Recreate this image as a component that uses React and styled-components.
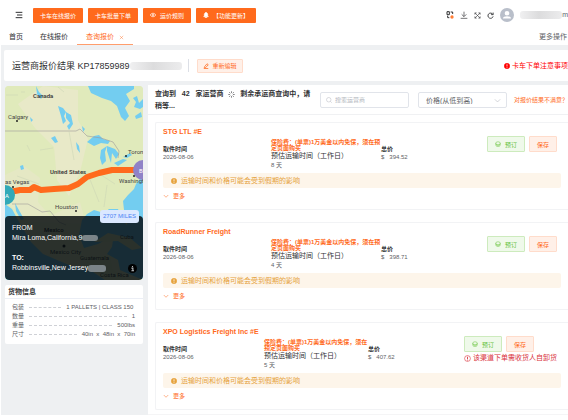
import React, { useState } from 'react';
import styled, { createGlobalStyle } from 'styled-components';

const GlobalStyle = createGlobalStyle`
  * {
    box-sizing: border-box;
  }
  body {
    margin: 0;
    background: #fff;
    color: #303133;
    font-family: 'Liberation Sans', 'Noto Sans CJK SC', sans-serif;
    font-size: 6px;
    line-height: 8px;
    overflow: hidden;
  }
  button, input, select {
    font-family: inherit;
  }
  h1, h2, h3, p, dl, dd, dt {
    margin: 0;
  }
`;

const TopBar = styled.header`
  display: flex;
  align-items: center;
  height: 30px;
  padding: 0 0 0 15px;
`;

const IconButton = styled.button`
  display: flex;
  padding: 0;
  border: none;
  background: none;
  color: #303133;
`;

const QuickLinks = styled.nav`
  display: flex;
  gap: 5px;
  margin-left: 10px;
`;

const PrimaryButton = styled.button`
  display: flex;
  align-items: center;
  justify-content: center;
  gap: 4px;
  height: 15px;
  padding: 0 7px;
  border: none;
  border-radius: 1px;
  background: #ff6a1c;
  color: #fff;
  font-size: 6px;
  white-space: nowrap;
`;

const Tools = styled.div`
  display: flex;
  align-items: center;
  gap: 6px;
  margin-left: auto;
`;

const UserName = styled.span`
  display: flex;
  align-items: center;
  color: #606266;
  font-size: 7px;
`;

const Redacted = styled.span`
  display: inline-block;
  width: ${props => props.$width}px;
  height: ${props => props.$height || 8}px;
  border-radius: 3px;
  background: ${props => props.$color || 'linear-gradient(90deg, #f0f0f1, #dcdcdd 45%, #ececed)'};
  vertical-align: middle;
`;

const TabBar = styled.nav`
  display: flex;
  gap: 1px;
  height: 15px;
  padding-left: 1px;
  font-size: 7px;
`;

const Tab = styled.a`
  display: flex;
  align-items: center;
  gap: 5px;
  height: 15px;
  padding: 0 ${props => (props.$active ? 9 : 8)}px;
  border-bottom: 1px solid ${props => (props.$active ? '#ff9d6c' : 'transparent')};
  color: ${props => (props.$active ? '#ff6a1c' : '#303133')};
  text-decoration: none;
`;

const MoreActions = styled.button`
  height: 14px;
  margin-left: auto;
  padding: 0 1px 0 0;
  border: none;
  background: none;
  color: #606266;
  font-size: 7px;
  line-height: 8px;
`;

const Page = styled.main`
  margin-left: 1px;
  background: #eef0f2;
  padding-top: 5px;
`;

const TitleCard = styled.section`
  display: flex;
  align-items: center;
  height: 31px;
  margin-left: 3px;
  padding-left: 8px;
  border-radius: 2px 0 0 2px;
  background: #fff;
`;

const PageTitle = styled.h1`
  display: flex;
  align-items: center;
  font-size: 9px;
  font-weight: 400;
  line-height: 12px;
  white-space: pre;
`;

const Divider = styled.span`
  width: 1px;
  height: 13px;
  margin: 0 8px 0 6px;
  background: #dcdfe6;
`;

const PlainButton = styled.button`
  display: flex;
  align-items: center;
  justify-content: center;
  gap: 4px;
  height: ${props => props.$height || 16}px;
  padding: 0 ${props => (props.$compact ? 5 : 7)}px;
  border: 1px solid ${props => (props.$tone === 'success' ? '#cdebbd' : '#ffdccb')};
  border-radius: 1px;
  background: ${props => (props.$tone === 'success' ? '#eff9ea' : '#fff0e8')};
  color: ${props => (props.$tone === 'success' ? '#67c23a' : '#ff6a1c')};
  font-size: 6px;
  white-space: nowrap;
`;

const Notice = styled.a`
  display: flex;
  align-items: center;
  gap: 2px;
  margin-left: auto;
  color: #f00;
  font-size: 7px;
  text-decoration: none;
  white-space: nowrap;
`;

const Columns = styled.div`
  display: grid;
  grid-template-columns: 138px 1fr;
  gap: 5px;
  align-items: start;
  padding: 4px 0 0 4px;
`;

const Sidebar = styled.aside`
  display: grid;
  gap: 5px;
  padding-top: 1px;
`;

const MapCard = styled.section`
  position: relative;
  height: 194px;
  border-radius: 4px;
  overflow: hidden;
  background: #e1eabf;

  > svg {
    display: block;
    width: 100%;
    height: 100%;
  }
`;

const RouteInfo = styled.div`
  position: absolute;
  left: 0;
  right: 0;
  bottom: 0;
  height: 64px;
  padding: 7px 7px;
  border-radius: 4px;
  background: rgba(2, 8, 12, 0.82);
  color: #fff;
  font-size: 7px;
  line-height: 10px;

  dd {
    margin-bottom: 10px;
  }
`;

const Miles = styled.span`
  position: absolute;
  right: 4px;
  top: 124px;
  padding: 1px 3px;
  border-radius: 3px;
  background: #dbe8ff;
  color: #4b83f5;
  font-size: 6px;
  line-height: 11px;
`;

const MapInfo = styled.button`
  position: absolute;
  right: 6px;
  bottom: 7px;
  display: flex;
  padding: 0;
  border: none;
  background: none;
`;

const CargoCard = styled.section`
  border-radius: 2px;
  background: #fff;
`;

const CargoTitle = styled.h2`
  padding: 2px 3px;
  border-bottom: 1px solid #ebeef5;
  font-size: 7px;
  line-height: 9px;
`;

const CargoList = styled.dl`
  display: grid;
  padding: 4px 8px 5px 7px;
`;

const CargoRow = styled.div`
  display: flex;
  align-items: center;
  gap: 5px;
  color: #606266;
  line-height: 9px;
  white-space: pre;

  &::before {
    content: '';
    order: 1;
    flex: 1;
    border-top: 1px dashed #cfd1d6;
  }
  dd {
    order: 2;
  }
`;

const Results = styled.section`
  background: #fff;
  min-width: 0;
`;

const FilterBar = styled.div`
  display: flex;
  align-items: flex-start;
  height: 30px;
  padding: 3px 0 0 7px;
  border-bottom: 1px solid #f0f1f3;
`;

const Summary = styled.h2`
  flex: none;
  width: 161px;
  margin-right: 4px;
  font-size: 7px;
  line-height: 12px;
  white-space: pre-wrap;

  svg {
    margin: 0 3px;
    vertical-align: middle;
  }
`;

const SearchBox = styled.label`
  display: flex;
  flex: none;
  align-items: center;
  gap: 3px;
  width: 89px;
  height: 16px;
  margin-top: 4px;
  padding: 0 5px;
  border: 1px solid #e1e4ea;
  border-radius: 2px;
  color: #b4b7be;

  input {
    flex: 1;
    min-width: 0;
    padding: 0;
    border: none;
    outline: none;
    font-size: 6px;
  }
  input::placeholder {
    color: #b4b7be;
  }
`;

const SortBox = styled.div`
  display: flex;
  flex: none;
  align-items: center;
  width: 89px;
  height: 16px;
  margin: 4px 0 0 9px;
  padding: 0 5px 0 7px;
  border: 1px solid #e1e4ea;
  border-radius: 2px;
  color: #b4b7be;

  select {
    flex: 1;
    height: 14px;
    padding: 0;
    border: none;
    outline: none;
    appearance: none;
    background: none;
    color: #606266;
    font-size: 7px;
  }
`;

const Feedback = styled.a`
  margin: 8px 0 0 7px;
  color: #ff6a1c;
  text-decoration: none;
  white-space: nowrap;
`;

const QuoteList = styled.div`
  display: grid;
  gap: 12px;
  padding: 7px 0 4px 7px;
  border-bottom: 1px solid #f5f5f6;
`;

const Quote = styled.article`
  height: 88px;
  padding: 4px 7px 0;
  border: 1px solid #f2f3f5;
  border-right: none;
  border-radius: 2px 0 0 2px;
`;

const Carrier = styled.h3`
  color: #ff6a1c;
  font-size: 7px;
  line-height: 9px;
`;

const QuoteBody = styled.div`
  display: grid;
  grid-template-columns: ${props => (props.$wide ? '101px 104px 1fr auto' : '108px 110px 1fr auto')};
  height: 37px;
`;

const Field = styled.div`
  padding-top: ${props => props.$top || 9}px;
  color: #606266;
  white-space: pre;

  strong {
    display: block;
    color: #303133;
  }
`;

const Insurance = styled.p`
  color: #ff6a1c;
  font-weight: 700;
  line-height: 6px;
  white-space: normal;
`;

const Transit = styled.p`
  color: #303133;
  font-size: 7px;
  line-height: 10px;
`;

const Actions = styled.div`
  display: grid;
  grid-template-columns: ${props => (props.$wide ? 'auto auto 1fr' : 'auto auto')};
  align-content: start;
  gap: 1px 4px;
  margin-right: 4px;
`;

const Unloading = styled.p`
  display: flex;
  grid-column: 1 / -1;
  align-items: center;
  gap: 2px;
  color: #d9303a;
  font-size: 7px;
  line-height: 10px;
  white-space: nowrap;
`;

const Alert = styled.p`
  display: flex;
  align-items: center;
  gap: 4px;
  height: 15px;
  padding-left: 8px;
  border-radius: 2px;
  background: #fdf5ea;
  color: #e6a23c;
  font-size: 7px;
`;

const MoreButton = styled.button`
  display: flex;
  align-items: center;
  gap: 4px;
  margin-top: 4px;
  padding: 0;
  border: none;
  background: none;
  color: #ff6a1c;
  font-size: 6px;
  line-height: 8px;
`;

const cargo = [
  ['包装', '1 PALLETS | CLASS 150 '],
  ['数量', '1'],
  ['重量', '500lbs'],
  ['尺寸', '40in  x  48in  x  70in'],
];

const quotes = [
  { carrier: 'STG LTL #E', price: '394.52', days: 8 },
  { carrier: 'RoadRunner Freight', price: '398.71', days: 4 },
  { carrier: 'XPO Logistics Freight Inc #E', price: '407.62', days: 5, unloading: true },
];

const Icon = ({ size = 6, width = 2, children }) => (
  <svg width={size} height={size} viewBox="0 0 24 24" fill="none" stroke="currentColor" strokeWidth={width} aria-hidden="true">
    {children}
  </svg>
);

const EyeIcon = () => (
  <Icon width={3}>
    <path d="M1 12C6 3 18 3 23 12C18 21 6 21 1 12Z" />
    <circle cx="12" cy="12" r="3" />
  </Icon>
);

const BellIcon = () => (
  <Icon>
    <path d="M3 19V17L5 15V10C5 6 8 4 10 3V1H14V3C17 4 19 6 19 10V15L21 17V19ZM9 21H15V23H9Z" fill="currentColor" />
  </Icon>
);

const EditIcon = () => (
  <Icon width={3}>
    <path d="M6 15L16 3L21 7L11 18L5 19ZM3 22H21" />
  </Icon>
);

const ChevronIcon = ({ size = 6 }) => (
  <Icon size={size}>
    <path d="M3 8L12 17L21 8" />
  </Icon>
);

const AlertIcon = ({ size = 6 }) => (
  <Icon size={size}>
    <circle cx="12" cy="12" r="11" fill="currentColor" />
    <path d="M12 5V14M12 16V19" stroke="#fff" strokeWidth="3" />
  </Icon>
);

const AlertOutlineIcon = () => (
  <Icon size={7}>
    <circle cx="12" cy="12" r="10" />
    <path d="M12 6V14M12 16V19" strokeWidth="3" />
  </Icon>
);

const CoinIcon = () => (
  <Icon>
    <ellipse cx="12" cy="9" rx="9" ry="6" />
    <path d="M3 9V16C3 24 21 24 21 16V9M4 14C8 19 16 19 20 14" />
  </Icon>
);

const LoadingIcon = () => (
  <Icon size={7}>
    <path d="M12 1V7M12 17V23M1 12H7M17 12H23M4 4L8 8M16 16L20 20M4 20L8 16M16 8L20 4" />
  </Icon>
);

const RouteMap = () => (
  <svg viewBox="5 86 138 194" preserveAspectRatio="xMidYMin slice" role="img" aria-label="Route map" fontFamily="Roboto, Noto Sans, sans-serif" fontSize="6" fill="#444">
    <rect x="5" y="86" width="138" height="194" fill="#e0eabb" />
    <path d="M43 86L78 90L78 120L88 139L80 172L69 196L57 180L54 147L35 128L18 104Z" fill="#e8e9c8" />
    <path d="M5 175L24 166L40 178L38 202L50 216L80 202L86 224L30 222L5 202Z" fill="#e5e8c4" />
    <g fill="#73cdf0">
      <path d="M88 86L91 93L102 98L111 101L117 106L121 117L125 121L129 116L125 108L130 101L126 94L134 89L134 86Z" />
      <path d="M133 98L136 102L134 107L140 109L143 107V99L139 103L137 96ZM135 116L141 112L142 117L136 119Z" />
      <path d="M58 106L63 108L66 112L64 116L66 121L63 124L61 116ZM66 112L71 115L73 124L69 130L67 126L70 123L66 118Z" />
      <path d="M87 142L94 136L99 135L103 139L110 141L108 144L101 143L94 146Z" />
      <path d="M107 146L101 150L100 158L102 165L106 161L105 152ZM107 146L115 149L119 154L116 159L112 153L111 163L107 151ZM114 163L123 159L127 160L118 166ZM123 157L130 153L132 155L127 158Z" />
      <path d="M36 86L39 92L43 96L41 99L37 94ZM51 138L55 136L58 142L55 143ZM20 166L23 165L24 169L21 170ZM76 142L79 146L80 153L77 149ZM82 126L85 129L83 132ZM30 117L33 120L31 122Z" />
      <path d="M143 175L136 184L134 189L128 195L123 201L124 210L128 218L127 225L122 220L118 209L109 209L104 213L94 210L87 214L82 220L79 235L84 248L98 244L107 239L113 240L112 247L107 254L118 260L120 270L143 280Z" />
      <path d="M5 204L12 209L18 220L31 242L43 254L69 265L90 270L105 280H5ZM15 203L20 212L24 219L21 220L16 211Z" />
    </g>
    <path d="M94 242L108 233L130 238L142 248L132 250L118 241ZM82 265L94 256L110 256L112 269L127 280H105L95 270Z" fill="#dce7b6" />
    <path d="M5 131H76L80 129L87 136L101 138L113 142L119 151L118 158M12 204L28 204L42 212L50 211L59 222L66 225" fill="none" stroke="#9d9b9c" strokeWidth="0.6" />
    <path d="M6 95H18M21 92L25 92M58 87L64 92M27 145L30 151M69 131L74 160M40 150L53 148M17 176L39 184M98 173L115 184M107 185L104 207M89 177L99 202" fill="none" stroke="#c9d2b4" strokeWidth="0.5" />
    <path d="M10 192L20 190L30 190L34 187L41 190L54 189L69 188L78 184L87 177L99 173L112 170L127 170L139 170" fill="none" stroke="#ff6a1c" strokeWidth="6" strokeLinejoin="round" />
    <circle cx="5" cy="195" r="10" fill="#32a9b8" />
    <circle cx="143" cy="170" r="10" fill="#8f82c7" />
    <text x="5" y="198" fill="#fff" fontSize="6">A</text>
    <text x="139" y="173" fill="#fff" fontSize="6">B</text>
    <g fontWeight="600" fill="#3b3b3b">
      <text x="33" y="98">Canada</text>
      <text x="50" y="174">United States</text>
      <text x="44" y="232">Mexico</text>
    </g>
    <text x="8" y="119">Calgary</text>
    <text x="128" y="154">Toron</text>
    <text x="5" y="184">as Vegas</text>
    <text x="119" y="183">Washingt</text>
    <text x="55" y="209">Houston</text>
    <text x="50" y="254">Mexico City</text>
    <text x="120" y="239">Cuba</text>
    <text x="80" y="260">Guatemala</text>
    <text x="100" y="277">Costa Rica</text>
    <g fill="#222">
      <circle cx="17" cy="121" r="1" />
      <circle cx="126" cy="156" r="1" />
      <circle cx="13" cy="187" r="1" />
      <circle cx="134" cy="176" r="1" />
      <circle cx="76" cy="211" r="1" />
      <circle cx="64" cy="246" r="1.5" />
    </g>
  </svg>
);

const QuoteCard = ({ quote }) => (
  <Quote>
    <Carrier>{quote.carrier}</Carrier>
    <QuoteBody $wide={quote.unloading}>
      <Field>
        <strong>取件时间</strong>
        2026-08-06
      </Field>
      <Field $top={3}>
        <Insurance>保险费：(单票)1万美金以内免保，须在预定页面购买</Insurance>
        <Transit>预估运输时间（工作日）</Transit>
        {quote.days} 天
      </Field>
      <Field>
        <strong>总价</strong>
        {`$   ${quote.price}`}
      </Field>
      <Actions $wide={quote.unloading}>
        <PlainButton $tone="success"><CoinIcon />预订</PlainButton>
        <PlainButton>保存</PlainButton>
        {quote.unloading && <Unloading><AlertOutlineIcon />该渠道下单需收货人自卸货</Unloading>}
      </Actions>
    </QuoteBody>
    <Alert><AlertIcon />运输时间和价格可能会受到假期的影响</Alert>
    <MoreButton><ChevronIcon />更多</MoreButton>
  </Quote>
);

const App = () => {
  const [search, setSearch] = useState('');

  return (
    <>
      <GlobalStyle />
      <TopBar>
        <IconButton aria-label="Menu">
          <Icon size={8}><path d="M2 4H22M6 12H22M2 20H22" strokeWidth="3" /></Icon>
        </IconButton>
        <QuickLinks>
          <PrimaryButton>卡车在线报价</PrimaryButton>
          <PrimaryButton>卡车批量下单</PrimaryButton>
          <PrimaryButton><EyeIcon />运价规则</PrimaryButton>
          <PrimaryButton><BellIcon />【功能更新】</PrimaryButton>
        </QuickLinks>
        <Tools>
          <IconButton aria-label="Language">
            <Icon size={8} width={3}>
              <path d="M3 2H10V11H3ZM14 3H20V9M5 14V20H10" />
              <circle cx="18" cy="18" r="5" fill="#ff7d35" stroke="none" />
            </Icon>
          </IconButton>
          <IconButton aria-label="Download">
            <Icon size={8}><path d="M12 2V16M5 10L12 17L19 10M2 22H22" /></Icon>
          </IconButton>
          <IconButton aria-label="Full screen">
            <Icon size={7}><path d="M3 9V3H9M15 3H21V9M21 15V21H15M9 21H3V15M3 3L21 21M21 3L3 21" /></Icon>
          </IconButton>
          <IconButton aria-label="Refresh">
            <Icon size={7} width={3}><path d="M20 8A9 9 0 1 0 21 15M21 2V9H14" /></Icon>
          </IconButton>
          <Icon size={14}>
            <circle cx="12" cy="12" r="12" fill="#b9bfca" stroke="none" />
            <path d="M8 9A4 4 0 1 1 16 9A4 4 0 1 1 8 9ZM5 18C5 13 19 13 19 18Z" fill="#fff" stroke="none" />
          </Icon>
          <UserName><Redacted $width={42} />m</UserName>
        </Tools>
      </TopBar>
      <TabBar>
        <Tab href="#home">首页</Tab>
        <Tab href="#online">在线报价</Tab>
        <Tab href="#query" $active>
          查询报价
          <Icon size={5}><path d="M4 4L20 20M20 4L4 20" /></Icon>
        </Tab>
        <MoreActions>更多操作</MoreActions>
      </TabBar>
      <Page>
        <TitleCard>
          <PageTitle>{'运营商报价结果 KP17859989'}<Redacted $width={52} /></PageTitle>
          <Divider />
          <PlainButton $height={14} $compact><EditIcon />重新编辑</PlainButton>
          <Notice href="#notice"><AlertIcon />卡车下单注意事项</Notice>
        </TitleCard>
        <Columns>
          <Sidebar>
            <MapCard>
              <RouteMap />
              <RouteInfo>
                <dl>
                  <dt>FROM</dt>
                  <dd>Mira Loma,California,9<Redacted $width={16} $height={6} $color="#7b8488" /></dd>
                  <dt><strong>TO:</strong></dt>
                  <dd>Robbinsville,New Jersey<Redacted $width={18} $height={7} $color="#7b8488" /></dd>
                </dl>
              </RouteInfo>
              <Miles>2707 MILES</Miles>
              <MapInfo aria-label="Map info">
                <Icon size={9}>
                  <circle cx="12" cy="12" r="12" fill="#000" stroke="none" />
                  <path d="M9 11H13V18M9 18H16M12 5V8" stroke="#b5babd" strokeWidth="3" />
                </Icon>
              </MapInfo>
            </MapCard>
            <CargoCard>
              <CargoTitle>货物信息</CargoTitle>
              <CargoList>
                {cargo.map(([label, value]) => (
                  <CargoRow key={label}>
                    <dt>{label}</dt>
                    <dd>{value}</dd>
                  </CargoRow>
                ))}
              </CargoList>
            </CargoCard>
          </Sidebar>
          <Results>
            <FilterBar>
              <Summary>{'查询到   42   家运营商 '}<LoadingIcon />{' 剩余承运商查询中，请稍等...'}</Summary>
              <SearchBox>
                <Icon size={6}><circle cx="11" cy="11" r="9" /><path d="M18 18L23 23" /></Icon>
                <input aria-label="搜索运营商" placeholder="搜索运营商" value={search} onChange={e => setSearch(e.target.value)} />
              </SearchBox>
              <SortBox>
                <select aria-label="排序" defaultValue="asc">
                  <option value="asc">价格(从低到高)</option>
                </select>
                <ChevronIcon size={7} />
              </SortBox>
              <Feedback href="#feedback">对报价结果不满意？</Feedback>
            </FilterBar>
            <QuoteList>
              {quotes.map(quote => <QuoteCard key={quote.carrier} quote={quote} />)}
            </QuoteList>
          </Results>
        </Columns>
      </Page>
    </>
  );
};

export default App;
